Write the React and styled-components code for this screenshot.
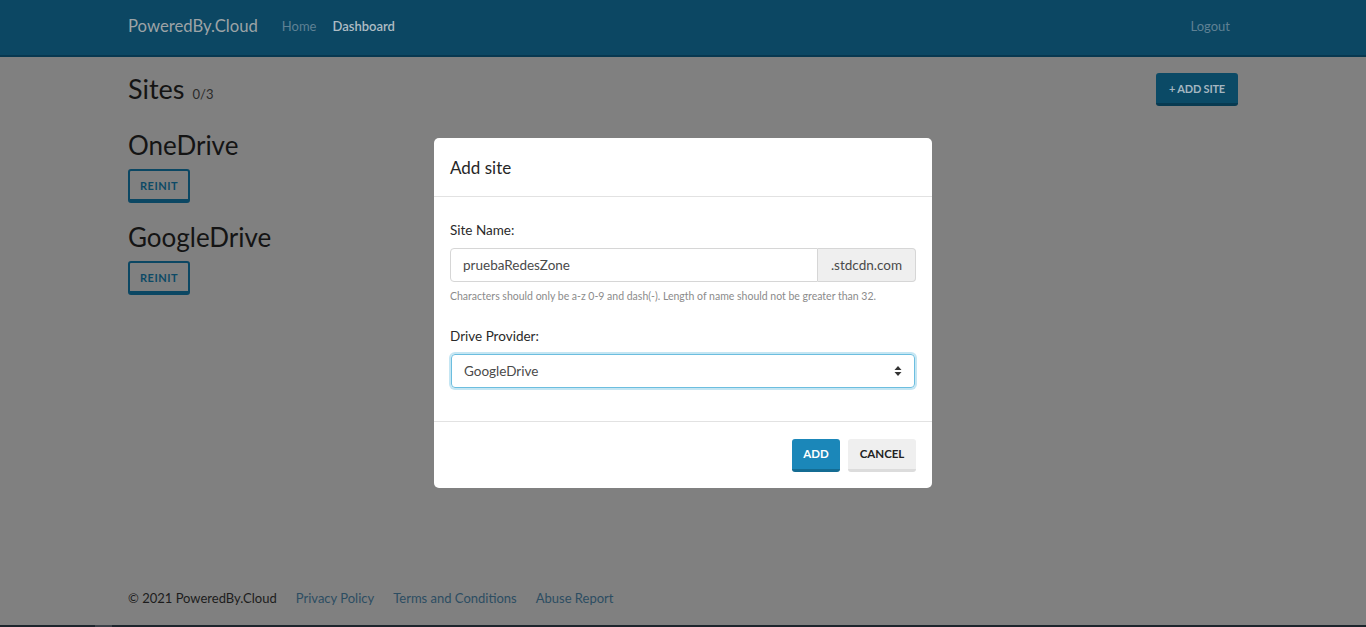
import React from "react";
import styled, { createGlobalStyle } from "styled-components";

const Global = createGlobalStyle`
  html, body { margin: 0; padding: 0; }
  body {
    background: #808080;
    font-family: "Source Sans Pro", Lato, "Liberation Sans", sans-serif;
    color: #1c1c1c;
    overflow: hidden;
  }
  * { box-sizing: border-box; }
`;

const Page = styled.div`
  height: 100vh;
  display: flex;
  flex-direction: column;
  position: relative;
`;

const Navbar = styled.nav`
  height: 57px;
  background: #0c4763;
  border-bottom: 2px solid #083850;
  flex-shrink: 0;
`;

const Container = styled.div`
  width: 1110px;
  margin: 0 auto;
`;

const NavInner = styled(Container)`
  height: 100%;
  display: flex;
  align-items: center;
  padding-bottom: 3px;
`;

const Brand = styled.a`
  font-size: 16.7px;
  color: #9da3a6;
  margin-right: 24px;
  white-space: nowrap;
`;

const NavLink = styled.a`
  font-size: 13px;
  margin-right: 16px;
  color: ${(p) => (p.$active ? "#aebcc4" : "#5f8194")};
  font-weight: ${(p) => (p.$active ? 600 : 400)};
`;

const Spacer = styled.div`
  flex: 1;
`;

const Logout = styled.a`
  font-size: 13px;
  color: #5f8194;
  margin-right: 8px;
`;

const Main = styled(Container)`
  flex: 1;
  padding-top: 16px;
`;

const TitleRow = styled.div`
  display: flex;
  justify-content: space-between;
  align-items: flex-start;
`;

const Title = styled.h1`
  margin: 0;
  font-size: 27px;
  font-weight: 400;
  line-height: 34px;
  color: #141414;
  margin-top: -1px;
`;

const Count = styled.small`
  font-size: 13px;
  color: #2a2a2a;
  margin-left: 1px;
`;

const PrimaryButton = styled.button`
  font-family: inherit;
  font-size: 11px;
  font-weight: 700;
  letter-spacing: -0.2px;
  height: 33px;
  padding: 0 13px;
  border: none;
  border-radius: 3px;
  background: #0b4a66;
  border-bottom: 3px solid #083a51;
  color: #a4b6c0;
  cursor: pointer;
`;

const Site = styled.section`
  margin-top: 18px;
`;

const SiteName = styled.h2`
  margin: 0 0 8px;
  font-size: 26px;
  font-weight: 400;
  line-height: 32px;
  color: #141414;
`;

const OutlineButton = styled.button`
  font-family: inherit;
  font-size: 11px;
  font-weight: 700;
  width: 62px;
  height: 34px;
  background: transparent;
  border: 2px solid #0b4763;
  border-bottom-width: 4px;
  border-radius: 3px;
  color: #0d4a66;
  letter-spacing: 0.5px;
  padding: 0;
`;

const Footer = styled.footer`
  flex-shrink: 0;
  padding-bottom: 17px;
`;

const FooterInner = styled(Container)`
  display: flex;
  gap: 19px;
  font-size: 13px;
  line-height: 20px;
`;

const Copy = styled.span`
  color: #1c1c1c;
`;

const FooterLink = styled.a`
  color: #2c4d62;
`;

const Taskbar = styled.div`
  height: 2px;
  flex-shrink: 0;
  background: #1c252c;
  display: flex;
`;

const TaskItem = styled.div`
  width: 17px;
  margin-left: 95px;
  background: #3b4148;
`;

const Modal = styled.div`
  position: absolute;
  left: 434px;
  top: 138px;
  width: 498px;
  background: #fff;
  border-radius: 5px;
  display: flex;
  flex-direction: column;
`;

const ModalHeader = styled.div`
  height: 59px;
  padding: 0 16px;
  display: flex;
  align-items: center;
  border-bottom: 1px solid #e2e2e2;
`;

const ModalTitle = styled.h3`
  margin: 0;
  font-size: 17px;
  font-weight: 400;
  color: #262626;
`;

const ModalBody = styled.div`
  padding: 23px 16px 33px;
  border-bottom: 1px solid #e2e2e2;
`;

const Field = styled.div`
  & + & {
    margin-top: 23px;
  }
`;

const Label = styled.label`
  display: block;
  font-size: 13.5px;
  line-height: 20px;
  color: #2a2a2a;
  margin-bottom: 8px;
`;

const InputGroup = styled.div`
  display: flex;
  height: 34px;
`;

const TextInput = styled.div`
  flex: 1;
  border: 1px solid #d6d6d6;
  border-radius: 4px 0 0 4px;
  padding: 0 12px;
  display: flex;
  align-items: center;
  font-size: 13.5px;
  color: #4a4a4a;
`;

const Addon = styled.div`
  width: 98px;
  border: 1px solid #d6d6d6;
  border-left: none;
  border-radius: 0 4px 4px 0;
  background: #efefef;
  display: flex;
  align-items: center;
  justify-content: center;
  font-size: 13.5px;
  color: #4a4a4a;
`;

const Help = styled.div`
  font-size: 10.5px;
  color: #8b8b8b;
  margin-top: 7px;
  line-height: 14px;
`;

const Select = styled.div`
  height: 34px;
  border: 1px solid #6cbedf;
  border-radius: 4px;
  box-shadow: 0 0 0 2px #c5e6f3;
  margin: 0 1px;
  padding: 0 12px;
  display: flex;
  align-items: center;
  justify-content: space-between;
  font-size: 13.5px;
  color: #4a4a4a;
`;

const ModalFooter = styled.div`
  height: 66px;
  padding: 0 16px;
  display: flex;
  align-items: center;
  justify-content: flex-end;
  gap: 8px;
`;

const FooterButton = styled.button`
  font-family: inherit;
  font-size: 11.5px;
  font-weight: 700;
  height: 33px;
  padding: 0;
  width: ${(p) => p.$w}px;
  border: none;
  border-radius: 3px;
  border-bottom: 3px solid ${(p) => (p.$primary ? "#146c93" : "#dcdcdc")};
  background: ${(p) => (p.$primary ? "#1b87b9" : "#efefef")};
  color: ${(p) => (p.$primary ? "#fff" : "#222")};
`;

const Chevron = () => (
  <svg width="8" height="12" viewBox="0 0 8 12">
    <path d="M4 1 L7.5 5 L0.5 5 Z" fill="#333" />
    <path d="M4 11 L7.5 7 L0.5 7 Z" fill="#333" />
  </svg>
);

export default function App() {
  return (
    <>
      <Global />
      <Page>
        <Navbar>
          <NavInner>
            <Brand>PoweredBy.Cloud</Brand>
            <NavLink>Home</NavLink>
            <NavLink $active>Dashboard</NavLink>
            <Spacer />
            <Logout>Logout</Logout>
          </NavInner>
        </Navbar>
        <Main>
          <TitleRow>
            <Title>
              Sites <Count>0/3</Count>
            </Title>
            <PrimaryButton>+ ADD SITE</PrimaryButton>
          </TitleRow>
          <Site>
            <SiteName>OneDrive</SiteName>
            <OutlineButton>REINIT</OutlineButton>
          </Site>
          <Site>
            <SiteName>GoogleDrive</SiteName>
            <OutlineButton>REINIT</OutlineButton>
          </Site>
        </Main>
        <Footer>
          <FooterInner>
            <Copy>© 2021 PoweredBy.Cloud</Copy>
            <FooterLink>Privacy Policy</FooterLink>
            <FooterLink>Terms and Conditions</FooterLink>
            <FooterLink>Abuse Report</FooterLink>
          </FooterInner>
        </Footer>
        <Taskbar>
          <TaskItem />
        </Taskbar>
        <Modal>
          <ModalHeader>
            <ModalTitle>Add site</ModalTitle>
          </ModalHeader>
          <ModalBody>
            <Field>
              <Label>Site Name:</Label>
              <InputGroup>
                <TextInput>pruebaRedesZone</TextInput>
                <Addon>.stdcdn.com</Addon>
              </InputGroup>
              <Help>
                Characters should only be a-z 0-9 and dash(-). Length of name
                should not be greater than 32.
              </Help>
            </Field>
            <Field>
              <Label>Drive Provider:</Label>
              <Select>
                <span>GoogleDrive</span>
                <Chevron />
              </Select>
            </Field>
          </ModalBody>
          <ModalFooter>
            <FooterButton $primary $w={48}>ADD</FooterButton>
            <FooterButton $w={68}>CANCEL</FooterButton>
          </ModalFooter>
        </Modal>
      </Page>
    </>
  );
}
